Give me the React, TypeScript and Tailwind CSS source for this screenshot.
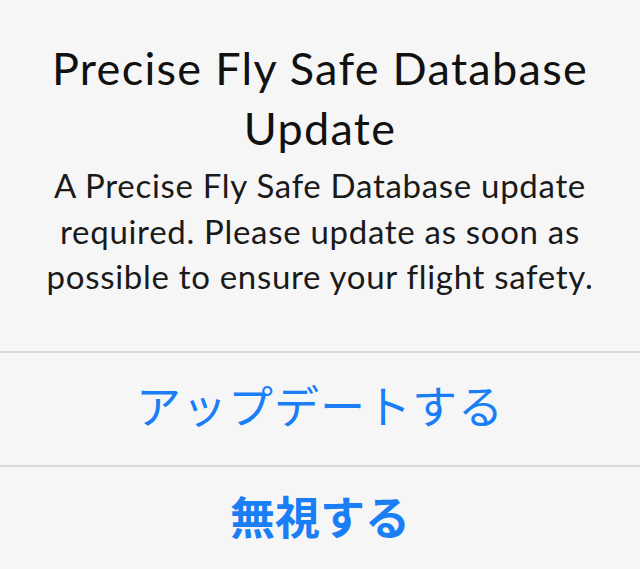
import React from "react"

const latin = "font-['Lato','Noto_Sans',sans-serif]"
const jp = "font-['Noto_Sans_CJK_JP',sans-serif]"

export default function App() {
  return (
    <div className="w-[640px] h-[569px] bg-[#f6f6f7] flex flex-col overflow-hidden">
      <div className={`${latin} text-center text-[#111] pt-[38px] h-[351px]`}>
        <h1 className="text-[45px] leading-[60px] tracking-[1.3px]">
          Precise Fly Safe Database
          <br />
          Update
        </h1>
        <p className="text-[33px] leading-[45.5px] tracking-[0.7px] mt-[5px] text-[#1a1a1a]">
          A Precise Fly Safe Database update
          <br />
          required. Please update as soon as
          <br />
          possible to ensure your flight safety.
        </p>
      </div>
      <div className="h-[2px] bg-[#d8d8da]" />
      <button className={`${jp} h-[112px] pb-[8px] flex items-center justify-center text-[45px] tracking-[1px] text-[#1a7ff5] font-normal`}>
        アップデートする
      </button>
      <div className="h-[2px] bg-[#d8d8da]" />
      <button className={`${jp} h-[102px] pb-[4px] flex items-center justify-center text-[45px] text-[#1a7ff5] font-bold`}>
        無視する
      </button>
    </div>
  )
}
